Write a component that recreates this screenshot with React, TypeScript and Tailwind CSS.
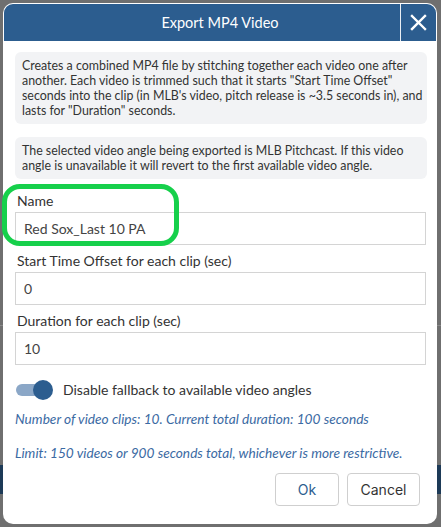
import React from "react";

export default function App() {
  return (
    <div
      className="relative w-[441px] h-[527px] overflow-hidden bg-[#6f6f6f] pt-[3px] pl-[3px]"
      style={{ fontFamily: "Lato, 'Noto Sans', sans-serif" }}
    >
      {/* dimmed background content peeking out */}
      <div className="absolute left-0 top-[465px] w-full h-[29px] bg-[#1d3a57]" />
      <div className="absolute left-0 top-[325px] w-full h-[1px] bg-[#8a8a8a]" />

      <div className="relative w-[434px] h-[521px] bg-white rounded-[10px] p-[1px] flex flex-col">
        {/* header */}
        <div className="relative h-[37px] bg-[#2c5d8f] rounded-t-[9px] flex items-center justify-center">
          <span className="text-white text-[14.5px]">Export MP4 Video</span>
          <div className="absolute right-0 top-0 h-full w-[36px] border-l border-white/90 flex items-center justify-center">
            <svg width="17" height="17" viewBox="0 0 17 17">
              <path d="M2 2 L15 15 M15 2 L2 15" stroke="white" strokeWidth="2.4" strokeLinecap="square" />
            </svg>
          </div>
        </div>

        <div className="flex flex-col pl-[11px] pr-[9px] pt-[11px] text-[14px] text-[#333]">
          <div className="bg-[#f2f3f5] rounded-[6px] pl-[7px] pr-[3px] py-[6px] leading-[15px] text-[12.4px]">
            Creates a combined MP4 file by stitching together each video one after another. Each video is trimmed such that it starts "Start Time Offset" seconds into the clip (in MLB's video, pitch release is ~3.5 seconds in), and lasts for "Duration" seconds.
          </div>
          <div className="mt-[13px] bg-[#f2f3f5] rounded-[6px] pl-[7px] pr-[3px] py-[6px] leading-[15px] text-[12.4px]">
            The selected video angle being exported is MLB Pitchcast. If this video angle is unavailable it will revert to the first available video angle.
          </div>

          <div className="mt-[13px] flex flex-col pr-[1px]">
            <label className="leading-[17px] pl-[2px] mb-[3px]">Name</label>
            <div className="h-[33px] border border-[#d4d4d4] flex items-center px-[8px] text-[#444]">Red Sox_Last 10 PA</div>

            <label className="leading-[17px] pl-[2px] mt-[7px] mb-[3px]">Start Time Offset for each clip (sec)</label>
            <div className="h-[33px] border border-[#d4d4d4] flex items-center px-[8px] text-[#444]">0</div>

            <label className="leading-[17px] pl-[2px] mt-[7px] mb-[3px]">Duration for each clip (sec)</label>
            <div className="h-[33px] border border-[#d4d4d4] flex items-center px-[8px] text-[#444]">10</div>
          </div>

          <div className="mt-[14px] flex items-center pl-[1px]">
            <div className="relative w-[37px] h-[20px] flex items-center">
              <div className="w-[34px] h-[12px] rounded-full bg-[#8ba7c7]" />
              <div className="absolute right-0 top-0 w-[20px] h-[20px] rounded-full bg-[#2c5d8f]" />
            </div>
            <span className="ml-[10px]">Disable fallback to available video angles</span>
          </div>

          <p className="mt-[10px] italic text-[#3b6aa3] leading-[17px] text-[13.7px]">
            Number of video clips: 10. Current total duration: 100 seconds
          </p>
          <p className="mt-[17px] italic text-[#3b6aa3] leading-[17px] text-[13.7px]">
            Limit: 150 videos or 900 seconds total, whichever is more restrictive.
          </p>

          <div className="mt-[12px] flex justify-end gap-[8px] pr-[7px]" style={{ fontFamily: "Inter, 'Liberation Sans', sans-serif" }}>
            <button className="w-[64px] h-[33px] border border-[#cfcfcf] rounded-[4px] text-[#2c5d8f] text-[14px] bg-white">Ok</button>
            <button className="w-[73px] h-[33px] border border-[#cfcfcf] rounded-[4px] text-[#333] text-[14px] bg-white">Cancel</button>
          </div>
        </div>

        {/* green annotation highlight */}
        <div className="absolute left-[-1px] top-[181px] w-[177px] h-[62px] border-[5px] border-[#16d04b] rounded-[18px] pointer-events-none" />
      </div>
    </div>
  );
}
